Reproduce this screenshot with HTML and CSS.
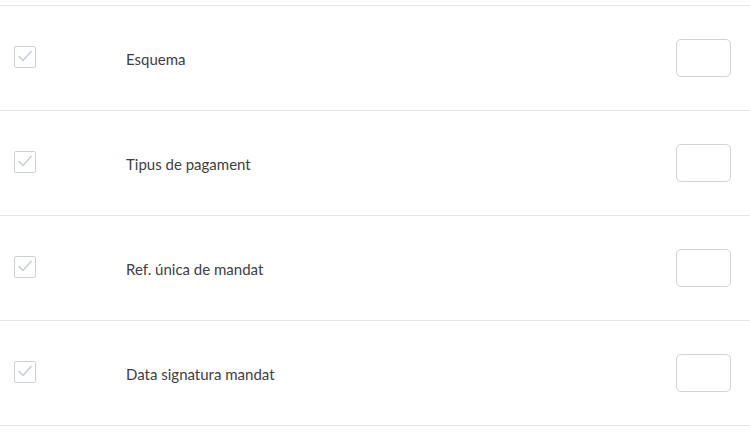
FILE: index.html
```html
<!DOCTYPE html>
<html lang="ca">
<head>
  <meta charset="UTF-8" />
  <meta name="viewport" content="width=device-width, initial-scale=1" />
  <title>Camps</title>
  <link rel="stylesheet" href="styles.css">
</head>
<body>
  <div class="field-list">
    <div class="field-row">
      <span class="check">
        <svg viewBox="0 0 20 20" width="20" height="20"><path d="M3.5 9 L8 13.5 L16.5 4" /></svg>
      </span>
      <span class="field-name">Esquema</span>
      <input class="order-box" type="text" />
    </div>
    <div class="field-row">
      <span class="check">
        <svg viewBox="0 0 20 20" width="20" height="20"><path d="M3.5 9 L8 13.5 L16.5 4" /></svg>
      </span>
      <span class="field-name">Tipus de pagament</span>
      <input class="order-box" type="text" />
    </div>
    <div class="field-row">
      <span class="check">
        <svg viewBox="0 0 20 20" width="20" height="20"><path d="M3.5 9 L8 13.5 L16.5 4" /></svg>
      </span>
      <span class="field-name">Ref. única de mandat</span>
      <input class="order-box" type="text" />
    </div>
    <div class="field-row">
      <span class="check">
        <svg viewBox="0 0 20 20" width="20" height="20"><path d="M3.5 9 L8 13.5 L16.5 4" /></svg>
      </span>
      <span class="field-name">Data signatura mandat</span>
      <input class="order-box" type="text" />
    </div>
  </div>
</body>
</html>
```

FILE: styles.css
```css
body {
  margin: 0;
  background: #fff;
  font-family: Lato, "Noto Sans", sans-serif;
  color: #404040;
}
.field-list {
  padding-top: 5px;
}
.field-row {
  display: flex;
  align-items: center;
  height: 104px;
  border-top: 1px solid #e6e6e6;
}
.field-row:last-child {
  border-bottom: 1px solid #e6e6e6;
}
.check {
  box-sizing: border-box;
  width: 22px;
  height: 22px;
  margin-left: 14px;
  margin-top: -2px;
  border: 1px solid #d0d0d0;
  border-radius: 2px;
  display: flex;
  align-items: center;
  justify-content: center;
}
.check svg {
  fill: none;
  stroke: #c0ccd8;
  stroke-width: 1.4;
}
.field-name {
  margin-left: 90px;
  margin-top: 1px;
  font-size: 15px;
  flex: 1;
}
.order-box {
  box-sizing: border-box;
  width: 55px;
  height: 38px;
  margin-right: 19px;
  border: 1px solid #d2d2d2;
  border-radius: 5px;
  padding: 0 6px;
}
```
